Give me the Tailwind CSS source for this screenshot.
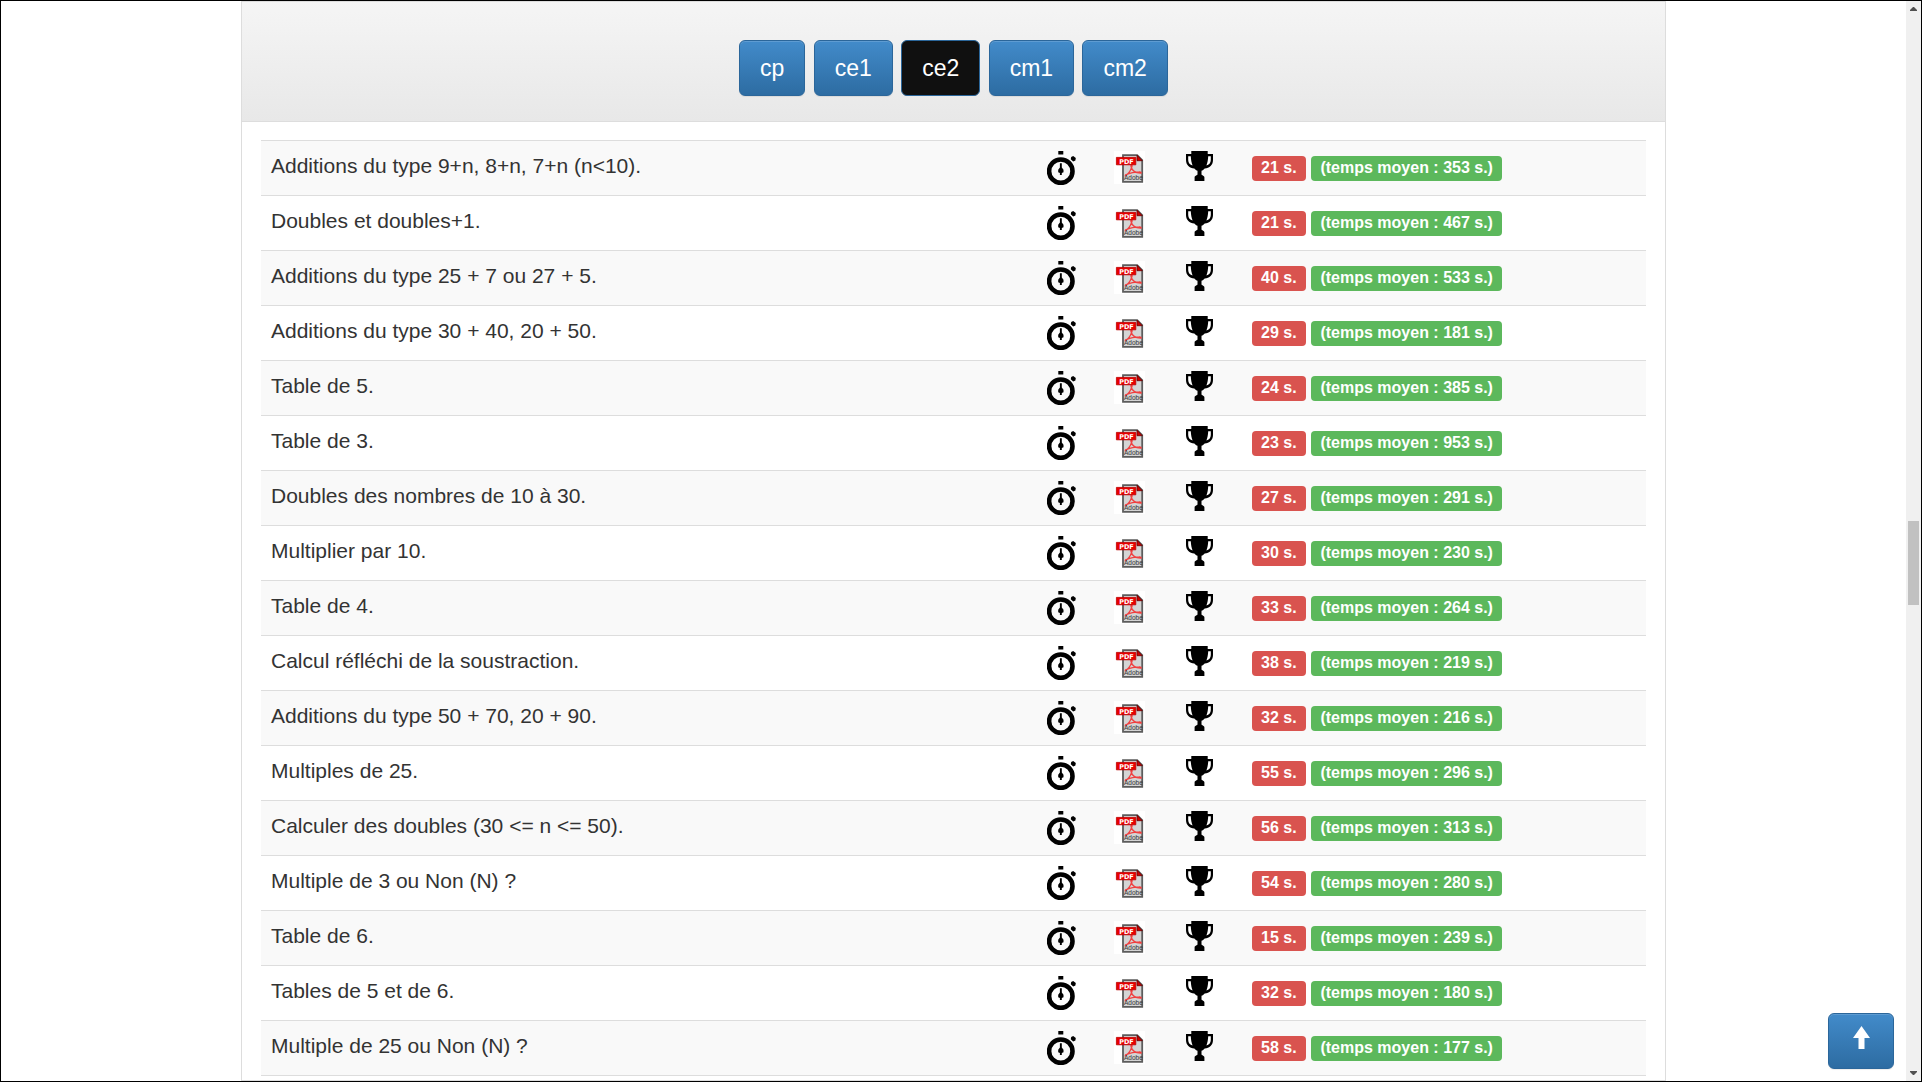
<!DOCTYPE html>
<html lang="fr">
<head>
<meta charset="utf-8">
<title>Calcul mental</title>
<script src="https://cdn.jsdelivr.net/npm/@tailwindcss/browser@4"></script>
</head>
<body class="flex h-screen overflow-hidden border border-black bg-white font-['Liberation_Sans',Arial,sans-serif] text-[21px] leading-[30px] text-[#333]">

<svg class="hidden" aria-hidden="true">
  <symbol id="watch" viewBox="0 0 29 34">
    <circle cx="13.8" cy="20.2" r="11.7" fill="none" stroke="#000" stroke-width="4.600"/>
    <path d="M11.3 0h5v3.500h-5zM12.900 12.300h1.900v4.200l1.700 2.200v2.600l-1.700.8v2h-1.900v-2l-1.700-.8v-2.600l1.700-2.200z"/>
    <path d="M24.200 6l2-1 2.600 2-.4 2.500-2.200 1-2.400-2.200z"/>
  </symbol>
  <symbol id="pdf" viewBox="0 0 31 33">
    <path fill="#fff" d="M0 0h31v33H0z"/>
    <path fill="#d4d4d4" stroke="#5c5c5c" stroke-width="1.800" d="M9 4.200h14.200l5 5v21.600H9z"/>
    <path fill="#d00000" stroke="#600" stroke-width=".8" d="M23 4.200l5.300 5.500H23z"/>
    <path fill="none" stroke="#f04040" stroke-width="1.300" d="M10.500 25c3-1 6-5 7.500-9.500.4-2.500-1.400-2.500-1 0 1 4 5 6.500 9.500 6.700 1.500-.2.500-1.600-1.500-1.400-4 0-8 .8-14 3.200"/>
    <path fill="#e80000" stroke="#b00" stroke-width=".8" d="M2.400 6.400h19.400v7.400H2.400z"/>
    <text x="5.200" y="12.500" font-family="DejaVu Sans" font-size="6.500" font-weight="bold" fill="#fff">PDF</text>
    <text x="10" y="29.300" font-family="Liberation Sans" font-size="6.500" fill="#333">Adobe</text>
  </symbol>
  <symbol id="trophy" viewBox="0 0 27 30">
    <path d="M5.300 0h16.400v3H27v6c0 5-3.500 8.300-8.300 8.500-1 1.200-2.200 2-3.200 2.300v3.400c0 1.300 2.900 1.300 2.900 3V30H8.600v-3.800c0-1.700 2.900-1.700 2.900-3v-3.400c-1-.3-2.200-1.100-3.200-2.300C3.500 17.300 0 14 0 9V3h5.300z"/>
    <path fill="#fff" d="M2.200 5.200h2.600c.1 3.500.8 6.700 1.800 9.200C4.100 14 2.200 12 2.200 9zM24.800 5.200h-2.600c-.1 3.500-.8 6.700-1.800 9.200C22.900 14 24.800 12 24.800 9z"/>
  </symbol>
</svg>

<div class="min-w-0 flex-1">
  <main class="mx-auto min-h-full max-w-[1425px] border border-[#ddd]">
    <nav class="border-b border-[#ddd] bg-linear-to-b from-[#f5f5f5] to-[#e8e8e8] pt-[38px] pb-[25px] text-center text-[30px] leading-14" aria-label="Niveaux">
      <button class="h-14 rounded-md border border-[#2b669a] bg-linear-to-b from-[#428bca] to-[#2d6ca2] px-5 align-top text-[23px] leading-[30px] text-white shadow-[inset_0_1px_0_rgba(255,255,255,0.15),0_1px_1px_rgba(0,0,0,0.075)]">cp</button>
      <button class="h-14 rounded-md border border-[#2b669a] bg-linear-to-b from-[#428bca] to-[#2d6ca2] px-5 align-top text-[23px] leading-[30px] text-white shadow-[inset_0_1px_0_rgba(255,255,255,0.15),0_1px_1px_rgba(0,0,0,0.075)]">ce1</button>
      <button aria-current="true" class="h-14 rounded-md border border-[#2b669a] bg-[#101010] px-5 align-top text-[23px] leading-[30px] text-white">ce2</button>
      <button class="h-14 rounded-md border border-[#2b669a] bg-linear-to-b from-[#428bca] to-[#2d6ca2] px-5 align-top text-[23px] leading-[30px] text-white shadow-[inset_0_1px_0_rgba(255,255,255,0.15),0_1px_1px_rgba(0,0,0,0.075)]">cm1</button>
      <button class="h-14 rounded-md border border-[#2b669a] bg-linear-to-b from-[#428bca] to-[#2d6ca2] px-5 align-top text-[23px] leading-[30px] text-white shadow-[inset_0_1px_0_rgba(255,255,255,0.15),0_1px_1px_rgba(0,0,0,0.075)]">cm2</button>
    </nav>
    <div class="px-[19px] pt-[18px]">
      <table class="w-full table-fixed border-separate border-spacing-0">
        <colgroup><col><col class="w-[68px]"><col class="w-[69px]"><col class="w-[70px]"><col class="w-[412px]"></colgroup>
        <tbody id="rows"></tbody>
      </table>
    </div>
  </main>
</div>

<div class="flex w-[15px] shrink-0 flex-col items-center bg-[#f0f0f0] py-[6px]" aria-hidden="true">
  <svg class="h-1 w-[7px]" viewBox="0 0 7 4"><path fill="#505050" d="M3 0h1l3 3v1H0V3z"/></svg>
  <div class="flex-[510]"></div>
  <div class="h-[84px] w-[11px] bg-[#c1c1c1]"></div>
  <div class="flex-[466]"></div>
  <svg class="h-1 w-[7px]" viewBox="0 0 7 4"><path fill="#505050" d="M3 4h1l3-3V0H0v1z"/></svg>
</div>

<a href="#" aria-label="Haut de page" class="fixed right-7 bottom-[13px] flex h-14 w-[66px] justify-center rounded-md border border-[#2b669a] bg-linear-to-b from-[#428bca] to-[#2d6ca2] pt-3 shadow-[inset_0_1px_0_rgba(255,255,255,0.15),0_1px_1px_rgba(0,0,0,0.075)]">
  <svg class="h-[23px] w-[17px]" viewBox="0 0 17 23"><path fill="#fff" d="M8.500 0L17 12h-5.500v11h-6V12H0z"/></svg>
</a>

<script>
const rows = [
  ["Additions du type 9+n, 8+n, 7+n (n&lt;10).", 21, 353],
  ["Doubles et doubles+1.", 21, 467],
  ["Additions du type 25 + 7 ou 27 + 5.", 40, 533],
  ["Additions du type 30 + 40, 20 + 50.", 29, 181],
  ["Table de 5.", 24, 385],
  ["Table de 3.", 23, 953],
  ["Doubles des nombres de 10 à 30.", 27, 291],
  ["Multiplier par 10.", 30, 230],
  ["Table de 4.", 33, 264],
  ["Calcul réfléchi de la soustraction.", 38, 219],
  ["Additions du type 50 + 70, 20 + 90.", 32, 216],
  ["Multiples de 25.", 55, 296],
  ["Calculer des doubles (30 &lt;= n &lt;= 50).", 56, 313],
  ["Multiple de 3 ou Non (N) ?", 54, 280],
  ["Table de 6.", 15, 239],
  ["Tables de 5 et de 6.", 32, 180],
  ["Multiple de 25 ou Non (N) ?", 58, 177],
  ["", 0, 0],
];
document.getElementById("rows").innerHTML = rows.map(([name, best, mean]) => name ? `
  <tr class="h-[55px] odd:bg-[#f9f9f9]">
    <td class="border-t border-[#ddd] px-[10px] pt-[10px] align-top">${name}</td>
    <td class="border-t border-[#ddd] pt-[10px] align-top"><a href="#" aria-label="Chronomètre"><svg class="mx-auto h-[34px] w-[29px]"><use href="#watch"/></svg></a></td>
    <td class="border-t border-[#ddd] pt-[10px] align-top"><a href="#" aria-label="PDF"><svg class="mx-auto h-[33px] w-[31px]"><use href="#pdf"/></svg></a></td>
    <td class="border-t border-[#ddd] pt-[10px] align-top"><a href="#" aria-label="Classement"><svg class="mx-auto h-[30px] w-[27px]"><use href="#trophy"/></svg></a></td>
    <td class="border-t border-[#ddd] pt-[10px] pl-[18px] align-top"><span class="inline-block rounded-[4px] bg-[#d9534f] px-[9px] pt-1 pb-[5px] text-base leading-4 font-bold text-white">${best} s.</span> <span class="inline-block rounded-[4px] bg-[#5cb85c] px-[9px] pt-1 pb-[5px] text-base leading-4 font-bold text-white">(temps moyen : ${mean} s.)</span></td>
  </tr>` : `<tr><td colspan="5" class="border-t border-[#ddd]"></td></tr>`).join("");
</script>
</body>
</html>
